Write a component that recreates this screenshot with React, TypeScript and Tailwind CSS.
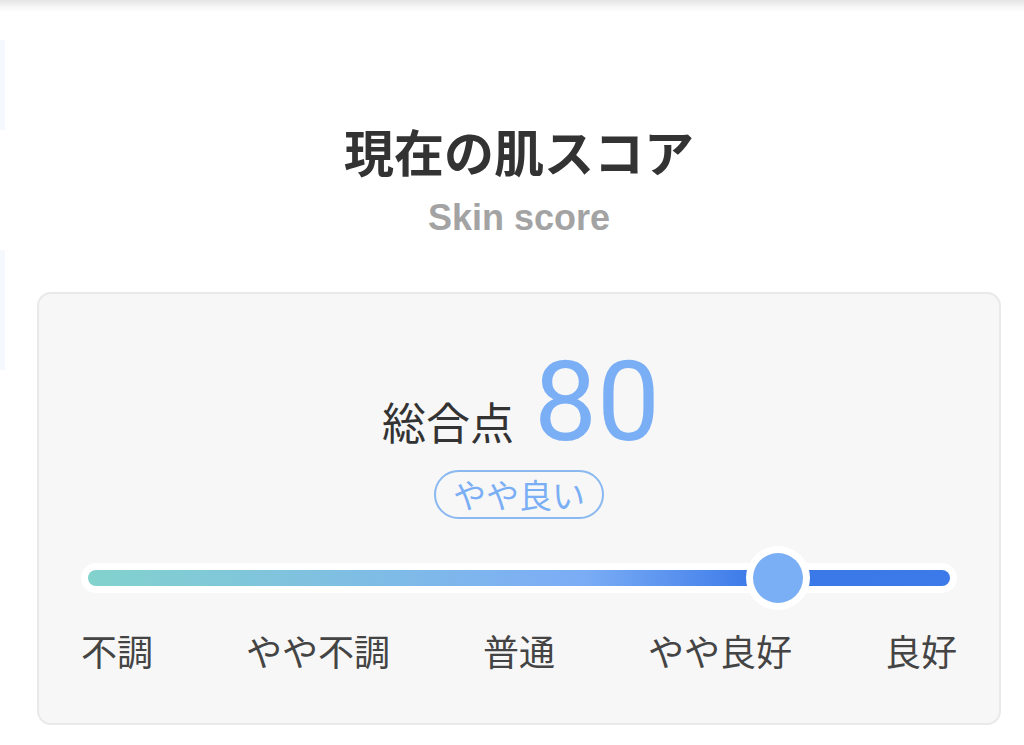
import React from "react";

const jp = { fontFamily: '"Noto Sans CJK JP", "Noto Sans", sans-serif' };

export default function App() {
  const labels = ["不調", "やや不調", "普通", "やや良好", "良好"];
  const score = 80;
  return (
    <div className="w-[1024px] h-[745px] bg-white overflow-hidden flex flex-col" style={jp}>
      <div className="h-[12px] shrink-0 bg-gradient-to-b from-[#e4e4e4] via-[#f4f4f4] to-white" />
      <div className="flex flex-1">
        <div className="w-[5px] shrink-0 flex flex-col">
          <div className="mt-[28px] h-[90px] bg-[#f5f8fd]" />
          <div className="mt-[120px] h-[120px] bg-[#f5f8fd]" />
        </div>
        <div className="ml-[32px] mr-[23px] flex-1 flex flex-col items-center">
          <h1 className="mt-[113px] text-[50px] leading-[50px] font-bold text-[#333333]">
            現在の肌スコア
          </h1>
          <div
            className="mt-[25px] text-[36px] leading-[36px] font-bold text-[#a3a3a3]"
            style={{ fontFamily: '"Liberation Sans", Arial, sans-serif' }}
          >
            Skin score
          </div>
          <div className="mt-[56px] w-full h-[433px] shrink-0 rounded-[14px] border-2 border-[#e9e9e9] bg-[#f7f7f7] flex flex-col items-center">
            <div className="mt-[52px] flex items-baseline gap-[20px] pl-[4px]">
              <span className="text-[44px] leading-none text-[#333333]">総合点</span>
              <span
                className="text-[112px] leading-none text-[#7aaef5]"
                style={{ fontFamily: 'Roboto, "Liberation Sans", sans-serif' }}
              >
                {score}
              </span>
            </div>
            <div className="mt-[12px] h-[49px] px-[17px] rounded-full border-[2.5px] border-[#8ab8f0] flex items-center text-[33px] leading-none text-[#7aaef5]">
              やや良い
            </div>
            <div className="mt-[27px] w-full px-[42px]">
              <div className="h-[64px] flex items-center">
                <div className="w-full rounded-full bg-white p-[7px]">
                  <div
                    className="relative h-[16px] rounded-full"
                    style={{
                      background:
                        "linear-gradient(to right, #82d2cd 0%, #7db0f3 52%, #79acf5 58%, #3a78e8 78%, #3b7ae8 100%)",
                    }}
                  >
                    <div
                      className="absolute top-1/2 w-[64px] h-[64px] -translate-x-1/2 -translate-y-1/2 rounded-full bg-white p-[7px]"
                      style={{ left: `${score}%` }}
                    >
                      <div className="w-full h-full rounded-full bg-[#7aaef5]" />
                    </div>
                  </div>
                </div>
              </div>
            </div>
            <div className="mt-[22px] w-full px-[42px] flex justify-between text-[36px] leading-[36px] text-[#444444]">
              {labels.map((l) => (
                <span key={l}>{l}</span>
              ))}
            </div>
          </div>
        </div>
      </div>
    </div>
  );
}
